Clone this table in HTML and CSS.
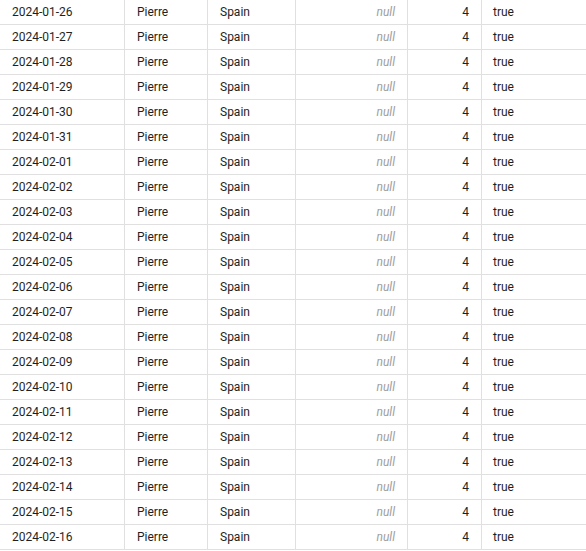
FILE: index.html
```html
<!DOCTYPE html>
<html>
<head>
<meta charset="utf-8">
<link rel="stylesheet" href="styles.css">
</head>
<body>
<div class="grid" id="grid"></div>
<script>
const g = document.getElementById('grid');
const dates = [];
for (let d = 26; d <= 31; d++) dates.push('2024-01-' + d);
for (let d = 1; d <= 16; d++) dates.push('2024-02-' + String(d).padStart(2, '0'));
let html = '';
for (const dt of dates) {
  html += '<div class="row">' +
    '<div class="cell">' + dt + '</div>' +
    '<div class="cell">Pierre</div>' +
    '<div class="cell">Spain</div>' +
    '<div class="cell num null">null</div>' +
    '<div class="cell num">4</div>' +
    '<div class="cell last">true</div>' +
    '</div>';
}
g.innerHTML = html;
</script>
</body>
</html>
```
FILE: styles.css
```css
html, body {
  margin: 0;
  padding: 0;
  background: #ffffff;
  overflow: hidden;
}
.grid {
  width: 586px;
  font-family: Roboto, "Liberation Sans", sans-serif;
  font-size: 12px;
  color: #1f1f1f;
}
.row {
  display: grid;
  grid-template-columns: 125px 83px 88px 112px 74px 1fr;
  height: 25px;
}
.cell {
  box-sizing: border-box;
  border-right: 1px solid #e0e0e0;
  border-bottom: 1px solid #e0e0e0;
  padding: 0 11px 0 12px;
  line-height: 25px;
  white-space: nowrap;
  overflow: hidden;
}
.cell.last {
  border-right: none;
  padding-left: 11px;
}
.num {
  text-align: right;
  padding-right: 12px;
}
.null {
  font-style: italic;
  color: #9e9e9e;
}
```
